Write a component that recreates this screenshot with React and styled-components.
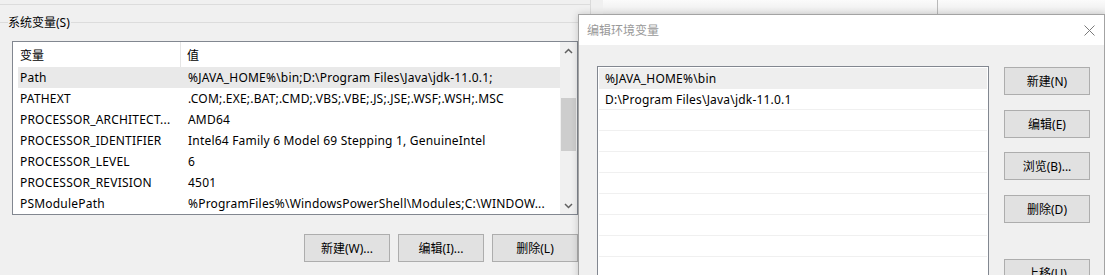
import styled, { createGlobalStyle } from "styled-components";

const GlobalStyle = createGlobalStyle`
  html, body {
    margin: 0;
    padding: 0;
  }
  body {
    font-family: "Noto Sans", "Noto Sans CJK SC", sans-serif;
    font-size: 12px;
    color: #000;
    background: #f0f0f0;
  }
`;

const Desktop = styled.div`
  position: relative;
  width: 1105px;
  height: 275px;
  overflow: hidden;
  background: #f0f0f0;
`;

const BackWindow = styled.div`
  position: absolute;
  left: 603px;
  top: 0;
  width: 502px;
  height: 14px;
  display: flex;
  background: linear-gradient(#fbfbfb, #ececec);
`;

const BackPane = styled.div`
  width: 334px;
  border-right: 1px solid #b9b9b9;
`;

const EnvWindow = styled.div`
  position: absolute;
  left: 0;
  top: 0;
  width: 591px;
  height: 275px;
  box-sizing: border-box;
  border-right: 1px solid #dadada;
  display: flex;
  flex-direction: column;
  background: #f0f0f0;
`;

const TopRule = styled.div`
  height: 4px;
  border-bottom: 1px solid #dcdcdc;
`;

const GroupHeader = styled.div`
  margin-top: 9px;
  height: 17px;
  display: flex;
  align-items: center;
`;

const GroupLine = styled.div`
  height: 1px;
  background: #dcdcdc;
  width: ${(p) => (p.$short ? "8px" : "auto")};
  flex: ${(p) => (p.$short ? "none" : "1")};
`;

const GroupLabel = styled.span`
  padding: 0 1px 0 0;
  line-height: 17px;
  white-space: nowrap;
`;

const VarList = styled.div`
  margin: 10px 0 0 12px;
  width: 566px;
  height: 174px;
  box-sizing: border-box;
  border: 1px solid #828790;
  background: #fff;
  display: flex;
`;

const VarContent = styled.div`
  flex: 1;
  display: flex;
  flex-direction: column;
  overflow: hidden;
`;

const HeaderRow = styled.div`
  height: 25px;
  display: flex;
  flex: none;
`;

const HeaderCell = styled.div`
  display: flex;
  align-items: center;
  box-sizing: border-box;
  width: ${(p) => (p.$first ? "168px" : "auto")};
  flex: ${(p) => (p.$first ? "none" : "1")};
  padding-left: ${(p) => (p.$first ? "7px" : "6px")};
  border-right: ${(p) => (p.$first ? "1px solid #e5e5e5" : "none")};
`;

const VarRow = styled.div`
  height: 21px;
  margin-left: 5px;
  display: flex;
  align-items: center;
  flex: none;
  letter-spacing: 0.2px;
  background: ${(p) => (p.$selected ? "#e9e9e9" : "transparent")};
`;

const NameCell = styled.div`
  width: 163px;
  box-sizing: border-box;
  padding-left: 2px;
  white-space: nowrap;
  overflow: hidden;
`;

const ValueCell = styled.div`
  flex: 1;
  padding-left: 7px;
  white-space: nowrap;
  overflow: hidden;
`;

const Scrollbar = styled.div`
  width: 17px;
  background: #f0f0f0;
  display: flex;
  flex-direction: column;
`;

const ScrollArrow = styled.div`
  height: 17px;
  display: flex;
  align-items: center;
  justify-content: center;
`;

const ScrollTrack = styled.div`
  flex: 1;
  display: flex;
  flex-direction: column;
`;

const ScrollThumb = styled.div`
  margin: 39px 1px 0 1px;
  height: 53px;
  background: #cdcdcd;
`;

const ButtonRow = styled.div`
  margin-top: 19px;
  padding-right: 12px;
  display: flex;
  justify-content: flex-end;
  gap: 8px;
`;

const WinButton = styled.button`
  width: 86px;
  height: 28px;
  margin-top: ${(p) => p.$top || 0}px;
  flex: none;
  box-sizing: border-box;
  border: 1px solid #adadad;
  background: #e1e1e1;
  font-family: inherit;
  font-size: 12px;
  color: #000;
  padding: 0 0 1px 0;
  white-space: nowrap;
`;

const EditDialog = styled.div`
  position: absolute;
  left: 578px;
  top: 14px;
  width: 527px;
  height: 275px;
  box-sizing: border-box;
  border: 1px solid #a3a3a3;
  background: #f0f0f0;
  box-shadow: 0 0 7px rgba(0, 0, 0, 0.18);
  display: flex;
  flex-direction: column;
`;

const TitleBar = styled.div`
  height: 30px;
  flex: none;
  background: #fff;
  display: flex;
  align-items: center;
  justify-content: space-between;
  padding: 0 9px 0 8px;
`;

const TitleText = styled.span`
  color: #999;
`;

const DialogBody = styled.div`
  flex: 1;
  display: flex;
  padding: 21px 0 0 18px;
`;

const PathList = styled.div`
  width: 392px;
  box-sizing: border-box;
  border: 1px solid #828790;
  border-bottom: none;
  background: #fff;
  padding: 1px 1px 0 1px;
  display: flex;
  flex-direction: column;
`;

const PathRow = styled.div`
  height: 21px;
  flex: none;
  box-sizing: border-box;
  display: flex;
  align-items: center;
  padding-left: 6px;
  white-space: nowrap;
  letter-spacing: 0.2px;
  background: ${(p) => (p.$selected ? "#eeeeee" : "#fff")};
  border-bottom: 1px solid ${(p) => (p.$selected ? "#eeeeee" : "#f0f0f0")};
`;

const ButtonColumn = styled.div`
  margin-left: 15px;
  display: flex;
  flex-direction: column;
`;

const Chevron = ({ up }) => (
  <svg width="9" height="6" viewBox="0 0 9 6">
    <path
      d={up ? "M1 5 L4.5 1.5 L8 5" : "M1 1 L4.5 4.5 L8 1"}
      fill="none"
      stroke="#606060"
      strokeWidth="1.5"
    />
  </svg>
);

const CloseIcon = () => (
  <svg width="11" height="11" viewBox="0 0 11 11">
    <path d="M0.5 0.5 L10.5 10.5 M10.5 0.5 L0.5 10.5" stroke="#7a7a7a" strokeWidth="1" />
  </svg>
);

const vars = [
  ["Path", "%JAVA_HOME%\\bin;D:\\Program Files\\Java\\jdk-11.0.1;"],
  ["PATHEXT", ".COM;.EXE;.BAT;.CMD;.VBS;.VBE;.JS;.JSE;.WSF;.WSH;.MSC"],
  ["PROCESSOR_ARCHITECT...", "AMD64"],
  ["PROCESSOR_IDENTIFIER", "Intel64 Family 6 Model 69 Stepping 1, GenuineIntel"],
  ["PROCESSOR_LEVEL", "6"],
  ["PROCESSOR_REVISION", "4501"],
  ["PSModulePath", "%ProgramFiles%\\WindowsPowerShell\\Modules;C:\\WINDOW..."],
];

const paths = ["%JAVA_HOME%\\bin", "D:\\Program Files\\Java\\jdk-11.0.1", "", "", "", "", "", "", "", ""];

const sideButtons = [
  ["新建(N)", 1],
  ["编辑(E)", 15],
  ["浏览(B)...", 14],
  ["删除(D)", 15],
  ["上移(U)", 36],
];

export default function App() {
  return (
    <Desktop>
      <GlobalStyle />
      <BackWindow>
        <BackPane />
      </BackWindow>

      <EnvWindow>
        <TopRule />
        <GroupHeader>
          <GroupLine $short />
          <GroupLabel>系统变量(S)</GroupLabel>
          <GroupLine />
        </GroupHeader>
        <VarList>
          <VarContent>
            <HeaderRow>
              <HeaderCell $first>变量</HeaderCell>
              <HeaderCell>值</HeaderCell>
            </HeaderRow>
            {vars.map(([name, value], i) => (
              <VarRow key={name} $selected={i === 0}>
                <NameCell>{name}</NameCell>
                <ValueCell>{value}</ValueCell>
              </VarRow>
            ))}
          </VarContent>
          <Scrollbar>
            <ScrollArrow>
              <Chevron up />
            </ScrollArrow>
            <ScrollTrack>
              <ScrollThumb />
            </ScrollTrack>
            <ScrollArrow>
              <Chevron />
            </ScrollArrow>
          </Scrollbar>
        </VarList>
        <ButtonRow>
          <WinButton>新建(W)...</WinButton>
          <WinButton>编辑(I)...</WinButton>
          <WinButton>删除(L)</WinButton>
        </ButtonRow>
      </EnvWindow>

      <EditDialog>
        <TitleBar>
          <TitleText>编辑环境变量</TitleText>
          <CloseIcon />
        </TitleBar>
        <DialogBody>
          <PathList>
            {paths.map((p, i) => (
              <PathRow key={i} $selected={i === 0}>
                {p}
              </PathRow>
            ))}
          </PathList>
          <ButtonColumn>
            {sideButtons.map(([label, top]) => (
              <WinButton key={label} $top={top}>
                {label}
              </WinButton>
            ))}
          </ButtonColumn>
        </DialogBody>
      </EditDialog>
    </Desktop>
  );
}
